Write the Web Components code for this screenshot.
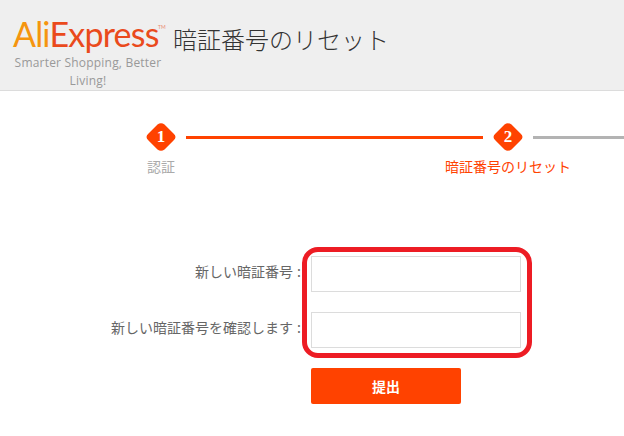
<!DOCTYPE html>
<html>

<head>
  <meta charset="UTF-8">
  <title>暗証番号のリセット</title>
  <style>
    html, body {
      margin: 0;
      height: 100%;
      overflow: hidden;
      background: #fff;
    }

    body {
      font-family: "Noto Sans CJK JP", "Liberation Sans", sans-serif;
    }
  </style>
</head>

<body>
  <template id="reset-header-template">
    <style>
      :host {
        display: flex;
        align-items: flex-start;
        height: 90px;
        background: #efefef;
        border-bottom: 1px solid #dcdcdc;
      }

      .brand {
        width: 156px;
        margin-left: 10px;
        text-align: center;
      }

      .logo {
        position: relative;
        height: 30px;
        margin-top: 17px;
        padding-left: 3px;
        text-align: left;
        font: 400 34px/34px Lato, "Open Sans", sans-serif;
        letter-spacing: -0.8px;
        color: #ea4a1c;
        white-space: nowrap;
      }

      .logo b {
        font-weight: 400;
        color: #f5950f;
      }

      .logo sup {
        position: absolute;
        left: 148px;
        top: 8px;
        font-size: 5px;
        line-height: 5px;
        letter-spacing: 0;
        color: #e98a70;
      }

      .tag {
        margin-top: 7px;
        font: 12px/18px "Open Sans", sans-serif;
        letter-spacing: 0.2px;
        color: #999;
      }

      h1 {
        margin: 19px 0 0 7px;
        font: 300 24px/40px "Noto Sans CJK JP", sans-serif;
        letter-spacing: 0;
        color: #333;
      }
    </style>
    <div class="brand">
      <div class="logo"><b>Ali</b>Express<sup>TM</sup></div>
      <div class="tag">Smarter Shopping, Better Living!</div>
    </div>
    <h1><slot></slot></h1>
  </template>

  <template id="step-bar-template">
    <style>
      :host {
        display: block;
        margin-top: 31px;
        height: 80px;
      }

      .track {
        display: flex;
        align-items: center;
        height: 30px;
        padding-left: 146px;
      }

      .line {
        height: 3px;
        margin-top: 1px;
      }

      .done {
        width: 297px;
        margin-left: 10px;
        margin-right: 10px;
        background: #ff4200;
      }

      .todo {
        flex: 1;
        margin-left: 10px;
        background: #b3b3b3;
      }

      .labels {
        position: relative;
        height: 24px;
        margin-top: 2px;
        font: 400 14px/24px "Noto Sans CJK JP", sans-serif;
      }

      .labels span {
        position: absolute;
        top: 0;
        white-space: nowrap;
      }

      .one {
        left: 147px;
        color: #aaa;
      }

      .two {
        left: 445px;
        color: #ff4200;
      }
    </style>
    <div class="track">
      <step-mark>1</step-mark>
      <div class="line done"></div>
      <step-mark>2</step-mark>
      <div class="line todo"></div>
    </div>
    <div class="labels">
      <span class="one">認証</span>
      <span class="two">暗証番号のリセット</span>
    </div>
  </template>

  <template id="step-mark-template">
    <style>
      :host {
        display: flex;
        width: 30px;
        height: 30px;
        flex: none;
      }

      svg {
        position: absolute;
        width: 30px;
        height: 30px;
      }

      span {
        position: relative;
        width: 30px;
        text-align: center;
        font: 700 17px/30px "Liberation Serif", serif;
        color: #fff;
      }
    </style>
    <svg viewBox="0 0 30 30"><path fill="#ff4200" d="M11.500 2.500Q15 0 18.500 2.500L27.500 11.500Q31.500 15 27.500 18.500L18.500 27.500Q15 30 11.500 27.500L2.500 18.500Q-1.500 15 2.500 11.500Z"/></svg>
    <span><slot></slot></span>
  </template>

  <template id="form-row-template">
    <style>
      :host {
        display: grid;
        grid-template-columns: 301px 210px;
        column-gap: 10px;
        align-items: center;
        height: 36px;
        margin-bottom: 20px;
      }

      label {
        margin-bottom: 6px;
        text-align: right;
        font: 400 14px/20px "Noto Sans CJK JP", sans-serif;
        word-spacing: 1px;
        color: #666;
        white-space: nowrap;
      }

      input {
        box-sizing: border-box;
        width: 210px;
        height: 36px;
        border: 1px solid #dcdcdc;
        background: #fff;
        outline: none;
      }
    </style>
    <label><slot></slot> :</label>
    <input type="password">
  </template>

  <template id="submit-button-template">
    <style>
      :host {
        display: block;
        margin-left: 311px;
      }

      button {
        display: block;
        width: 150px;
        height: 36px;
        padding: 0;
        border: 0;
        border-radius: 2px;
        background: #ff4200;
        color: #fff;
        font: 700 14px/36px "Noto Sans CJK JP", sans-serif;
      }
    </style>
    <button><slot></slot></button>
  </template>

  <template id="reset-form-template">
    <style>
      :host {
        display: block;
        position: relative;
        padding-top: 54px;
      }

      /* hand drawn highlight on top of the two inputs */
      .mark {
        position: absolute;
        left: 302px;
        top: 45px;
        box-sizing: border-box;
        width: 230px;
        height: 111px;
        border: 5px solid #ed1c24;
        border-radius: 16px;
        pointer-events: none;
      }
    </style>
    <slot></slot>
    <div class="mark"></div>
  </template>

  <reset-header>暗証番号のリセット</reset-header>
  <step-bar></step-bar>
  <reset-form>
    <form-row>新しい暗証番号</form-row>
    <form-row>新しい暗証番号を確認します</form-row>
    <submit-button>提出</submit-button>
  </reset-form>

  <script>
    // every element is the same: clone its template into an open shadow root
    function register(name, templateId) {
      customElements.define(name, class extends HTMLElement {
        constructor() {
          super();
          const content = document.getElementById(templateId).content;
          this.attachShadow({ mode: 'open' }).appendChild(content.cloneNode(true));
        }
      });
    }

    register('reset-header', 'reset-header-template');
    register('step-mark', 'step-mark-template');
    register('step-bar', 'step-bar-template');
    register('form-row', 'form-row-template');
    register('submit-button', 'submit-button-template');
    register('reset-form', 'reset-form-template');
  </script>
</body>

</html>
